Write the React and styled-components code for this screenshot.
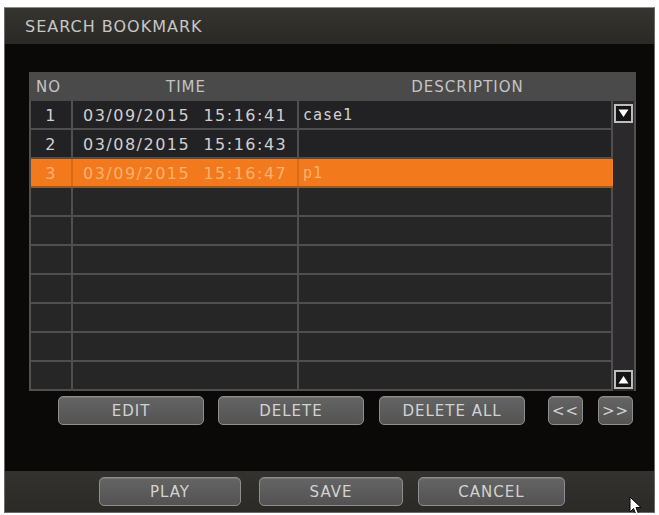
import styled, { createGlobalStyle } from "styled-components";

const GlobalStyle = createGlobalStyle`
  html, body {
    margin: 0;
    padding: 0;
    background: #ffffff;
  }
  body {
    font-family: "DejaVu Sans", "Liberation Sans", sans-serif;
  }
`;

const Dialog = styled.div`
  position: relative;
  margin: 7px 0 0 4px;
  width: 651px;
  height: 506px;
  box-sizing: border-box;
  border: 1px solid #6a6a66;
  border-top-color: #8a8a86;
  background: #0b0808;
  display: flex;
  flex-direction: column;
`;

const TitleBar = styled.div`
  height: 36px;
  flex: none;
  display: flex;
  align-items: center;
  padding-left: 20px;
  background: linear-gradient(#36342f, #2b2925);
  color: #c6c6c6;
  font-size: 16px;
  letter-spacing: 1px;
`;

const Body = styled.div`
  flex: 1;
  padding: 28px 18px 0 24px;
  display: flex;
  flex-direction: column;
`;

const COLS = "44px 226px 314px 23px";

const Table = styled.div`
  width: 607px;
  display: flex;
  flex-direction: column;
`;

const HeaderRow = styled.div`
  display: grid;
  grid-template-columns: ${COLS};
  height: 29px;
  background: #4a4a4a;
  color: #c4c4c4;
  font-size: 15px;
  letter-spacing: 1px;
`;

const HeadCell = styled.div`
  display: flex;
  align-items: center;
  justify-content: ${(p) => (p.$left ? "flex-start" : "center")};
  padding-left: ${(p) => (p.$left ? "7px" : "0")};
  grid-column: ${(p) => p.$span || "auto"};
  padding-top: 1px;
`;

const TableBody = styled.div`
  display: flex;
  height: 290px;
`;

const Rows = styled.div`
  width: 584px;
  display: flex;
  flex-direction: column;
  border-left: 2px solid #515151;
  box-sizing: border-box;
`;

const Row = styled.div`
  display: grid;
  grid-template-columns: 42px 226px 314px;
  height: 29px;
  box-sizing: border-box;
  border-bottom: 2px solid ${(p) => (p.$active ? "#9a5a22" : "#4f4f4f")};
  background: ${(p) =>
    p.$active ? "#f37a1c" : p.$filled ? "#222225" : "#262626"};
  color: ${(p) => (p.$active ? "#f9b071" : "#d0d0d0")};
`;

const Cell = styled.div`
  display: flex;
  align-items: center;
  justify-content: ${(p) => (p.$center ? "center" : "flex-start")};
  padding-left: ${(p) => p.$pad || "0"};
  border-right: 2px solid ${(p) => (p.$active ? "#d86a18" : "#4f4f4f")};
  font-size: 16px;
  letter-spacing: 1.5px;
  white-space: pre;
  padding-top: 1px;
`;

const DescCell = styled(Cell)`
  font-family: "DejaVu Sans Mono", "Liberation Mono", monospace;
  font-size: 15px;
  letter-spacing: 1px;
  border-right-color: ${(p) => (p.$active ? "#f37a1c" : "#4f4f4f")};
`;

const ScrollTrack = styled.div`
  width: 23px;
  box-sizing: border-box;
  background: #2b292b;
  border-right: 2px solid #505050;
  display: flex;
  flex-direction: column;
  justify-content: space-between;
  align-items: center;
  padding: 3px 0 2px 0;
`;

const ScrollButton = styled.div`
  width: 19px;
  height: 19px;
  box-sizing: border-box;
  border: 2px solid #bdbdbd;
  background: #141414;
  display: flex;
  align-items: center;
  justify-content: center;
`;

const ButtonRow = styled.div`
  display: flex;
  align-items: center;
  margin-top: 5px;
  padding-left: 29px;
`;

const Button = styled.div`
  width: ${(p) => p.$w || 146}px;
  height: 29px;
  margin-left: ${(p) => p.$gap || 0}px;
  box-sizing: border-box;
  border: 1px solid #8e8e8e;
  border-radius: 5px;
  background: linear-gradient(#646464, #535353);
  box-shadow: inset 0 1px 0 rgba(255, 255, 255, 0.12);
  color: #d2d2d2;
  font-size: 15px;
  letter-spacing: 1px;
  display: flex;
  align-items: center;
  justify-content: center;
  padding-top: 1px;
`;

const BottomBar = styled.div`
  height: 41px;
  flex: none;
  display: flex;
  align-items: center;
  padding-left: 94px;
  background: linear-gradient(#34322e, #2c2a26);
`;

const Cursor = styled.svg`
  position: absolute;
  left: 624px;
  top: 488px;
`;

const records = [
  { no: 1, time: "03/09/2015  15:16:41", desc: "case1" },
  { no: 2, time: "03/08/2015  15:16:43", desc: "" },
  { no: 3, time: "03/09/2015  15:16:47", desc: "p1", active: true },
];

function Triangle({ up }) {
  return (
    <svg width="11" height="9" viewBox="0 0 11 9">
      <polygon
        points={up ? "5.5,1 10.5,8.5 0.5,8.5" : "0.5,0.5 10.5,0.5 5.5,8"}
        fill="#ffffff"
      />
    </svg>
  );
}

export default function App() {
  const rows = Array.from({ length: 10 }, (_, i) => records[i] || null);
  return (
    <>
      <GlobalStyle />
      <Dialog>
        <TitleBar>SEARCH BOOKMARK</TitleBar>
        <Body>
          <Table>
            <HeaderRow>
              <HeadCell $left>NO</HeadCell>
              <HeadCell>TIME</HeadCell>
              <HeadCell $span="3 / 5">DESCRIPTION</HeadCell>
            </HeaderRow>
            <TableBody>
              <Rows>
                {rows.map((r, i) => (
                  <Row key={i} $filled={!!r} $active={r?.active}>
                    <Cell $center $active={r?.active}>{r ? r.no : ""}</Cell>
                    <Cell $pad="10px" $active={r?.active}>{r ? r.time : ""}</Cell>
                    <DescCell $pad="4px" $active={r?.active}>{r ? r.desc : ""}</DescCell>
                  </Row>
                ))}
              </Rows>
              <ScrollTrack>
                <ScrollButton>
                  <Triangle />
                </ScrollButton>
                <ScrollButton>
                  <Triangle up />
                </ScrollButton>
              </ScrollTrack>
            </TableBody>
          </Table>
          <ButtonRow>
            <Button>EDIT</Button>
            <Button $gap={14}>DELETE</Button>
            <Button $gap={15}>DELETE ALL</Button>
            <Button $w={35} $gap={23}>&lt;&lt;</Button>
            <Button $w={35} $gap={15}>&gt;&gt;</Button>
          </ButtonRow>
        </Body>
        <BottomBar>
          <Button $w={142}>PLAY</Button>
          <Button $w={144} $gap={18}>SAVE</Button>
          <Button $w={147} $gap={15}>CANCEL</Button>
        </BottomBar>
        <Cursor width="14" height="20" viewBox="0 0 14 20">
          <path
            d="M1 1 L1 16 L4.5 12.5 L7 18.5 L9.5 17.5 L7 11.5 L12 11.5 Z"
            fill="#ffffff"
            stroke="#000000"
            strokeWidth="1"
          />
        </Cursor>
      </Dialog>
    </>
  );
}
